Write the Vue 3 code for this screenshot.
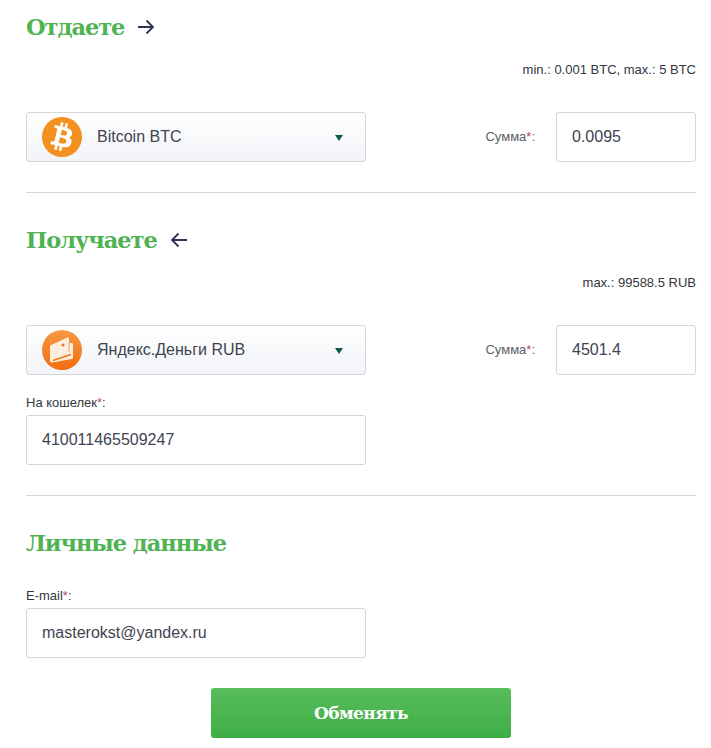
<script setup>
const btcB = 'M17.288 10.291c.24-1.59-.974-2.45-2.64-3.03l.54-2.153-1.315-.33-.525 2.107c-.345-.087-.705-.167-1.064-.25l.526-2.127-1.32-.33-.54 2.165c-.285-.067-.565-.132-.84-.2l-1.815-.45-.35 1.407s.975.225.955.236c.535.136.63.486.615.766l-1.477 5.92c-.075.166-.24.406-.614.314.015.02-.96-.24-.96-.24l-.66 1.51 1.71.426.93.242-.54 2.19 1.32.327.54-2.17c.36.1.705.19 1.05.273l-.51 2.154 1.32.33.545-2.19c2.24.427 3.93.257 4.64-1.774.57-1.637-.03-2.58-1.217-3.196.854-.193 1.5-.76 1.68-1.93h.01zm-3.01 4.22c-.404 1.64-3.157.75-4.05.53l.72-2.9c.896.23 3.757.67 3.33 2.37zm.41-4.24c-.37 1.49-2.662.735-3.405.55l.654-2.64c.744.18 3.137.524 2.75 2.084v.006z'
</script>

<template>
  <main class="page">
    <section class="section first">
      <h2 class="title">Отдаете
        <svg class="arrow" width="20" height="16" viewBox="0 0 20 16"><path d="M2 8h15M10.500 1.500 17 8l-6.500 6.500" /></svg>
      </h2>
      <p class="limits">min.: 0.001 BTC, max.: 5 BTC</p>
      <div class="row">
        <div class="select">
          <svg class="coin" width="40" height="40" viewBox="0 0 24 24">
            <circle cx="12" cy="12" r="12" fill="#f3901f" />
            <path :d="btcB" fill="#fff" transform="translate(-1.800 -1.800) scale(1.150)" />
          </svg>
          <span class="name">Bitcoin BTC</span>
          <i class="caret"></i>
        </div>
        <div class="sum">
          <label class="sum-label">Сумма<b>*</b>:</label>
          <input class="field small" value="0.0095" />
        </div>
      </div>
    </section>

    <section class="section">
      <h2 class="title">Получаете
        <svg class="arrow" width="20" height="16" viewBox="0 0 20 16"><path d="M18 8H3M9.500 1.500 3 8l6.500 6.500" /></svg>
      </h2>
      <p class="limits">max.: 99588.5 RUB</p>
      <div class="row">
        <div class="select">
          <svg class="coin" width="40" height="40" viewBox="0 0 40 40">
            <defs>
              <linearGradient id="ym" x1="0" y1="0" x2="0" y2="1">
                <stop offset="0" stop-color="#f79a45" />
                <stop offset="1" stop-color="#f26b10" />
              </linearGradient>
            </defs>
            <circle cx="20" cy="20" r="20" fill="url(#ym)" />
            <path d="M8 15.500 25.500 7.500c.8-.3 1.500.2 1.500 1V13h2.500c1 0 1.500.6 1.500 1.500v13c0 1-.6 1.500-1.500 1.500l-19 3.500c-1.500.2-2.500-.6-2.500-2z" fill="#fdeedd" />
            <path d="M11 30.500 29 24.500" stroke="#f2761a" stroke-width="1.500" fill="none" />
            <path d="M27 13v9" stroke="#f2a263" stroke-width="1" fill="none" />
            <circle cx="21" cy="15" r="1.600" fill="#f2761a" />
          </svg>
          <span class="name">Яндекс.Деньги RUB</span>
          <i class="caret"></i>
        </div>
        <div class="sum">
          <label class="sum-label">Сумма<b>*</b>:</label>
          <input class="field small" value="4501.4" />
        </div>
      </div>
      <label class="field-label wallet-label">На кошелек<b>*</b>:</label>
      <input class="field wide" value="410011465509247" />
    </section>

    <section class="section last">
      <h2 class="title">Личные данные</h2>
      <label class="field-label email-label">E-mail<b>*</b>:</label>
      <input class="field wide" value="masterokst@yandex.ru" />
    </section>

    <div class="actions">
      <button class="submit" type="button">Обменять</button>
    </div>
  </main>
</template>

<style>
html, body { margin: 0; background: #fff; }
</style>

<style scoped>
.page {
  box-sizing: border-box;
  width: 711px;
  height: 748px;
  padding: 0 15px 0 26px;
  overflow: hidden;
  font-family: "Liberation Sans", Arial, sans-serif;
  color: #3a3f4a;
}
.section { border-bottom: 1px solid #d4d6d4; padding-bottom: 30px; }
.section.first { padding-top: 12px; }
.section + .section { padding-top: 32px; }
.section.last { border-bottom: 0; padding-bottom: 0; }
.title {
  display: flex;
  align-items: center;
  gap: 12px;
  margin: 0;
  height: 30px;
  font-family: "DejaVu Serif", serif;
  font-size: 22.500px;
  font-weight: 700;
  letter-spacing: -1.050px;
  color: #4fb253;
}
.arrow { fill: none; stroke: #2c3350; stroke-width: 1.800; }
.limits {
  margin: 21px 0 0;
  height: 14px;
  line-height: 14px;
  font-size: 13px;
  text-align: right;
  color: #33363d;
}
.row {
  display: flex;
  justify-content: space-between;
  margin-top: 35px;
}
.select {
  box-sizing: border-box;
  width: 340px;
  height: 50px;
  display: flex;
  align-items: center;
  padding: 0 22px 0 15px;
  border: 1px solid #d4d6d8;
  border-radius: 3px;
  background: linear-gradient(#ffffff, #f1f3f7);
}
.coin { flex: none; }
.name { flex: 1; margin-left: 15px; font-size: 16px; color: #3f4450; }
.caret {
  width: 0;
  height: 0;
  margin-top: 2px;
  border-left: 4.500px solid transparent;
  border-right: 4.500px solid transparent;
  border-top: 6px solid #0f5a46;
}
.sum { display: flex; align-items: center; gap: 21px; }
.sum-label { font-size: 13px; color: #5a5f66; margin-top: -1px; }
b { font-weight: 400; color: #b4505c; }
.field {
  box-sizing: border-box;
  display: block;
  height: 50px;
  padding: 0 15px;
  border: 1px solid #d4d6d8;
  border-radius: 3px;
  background: #fff;
  font-family: inherit;
  font-size: 16px;
  color: #3f4450;
  outline: none;
}
.small { width: 140px; }
.wide { width: 340px; }
.field-label { display: block; font-size: 13px; height: 14px; line-height: 14px; color: #33363d; }
.wallet-label { margin-top: 21px; margin-bottom: 5px; }
.email-label { margin-top: 31px; margin-bottom: 5px; }
.actions { display: flex; justify-content: center; margin-top: 30px; }
.submit {
  width: 300px;
  height: 50px;
  border: 0;
  border-radius: 3px;
  background: linear-gradient(#58bd5c, #3fae45);
  font-family: "DejaVu Serif", serif;
  font-size: 17px;
  font-weight: 700;
  letter-spacing: -.6px;
  color: #fff;
}
</style>
